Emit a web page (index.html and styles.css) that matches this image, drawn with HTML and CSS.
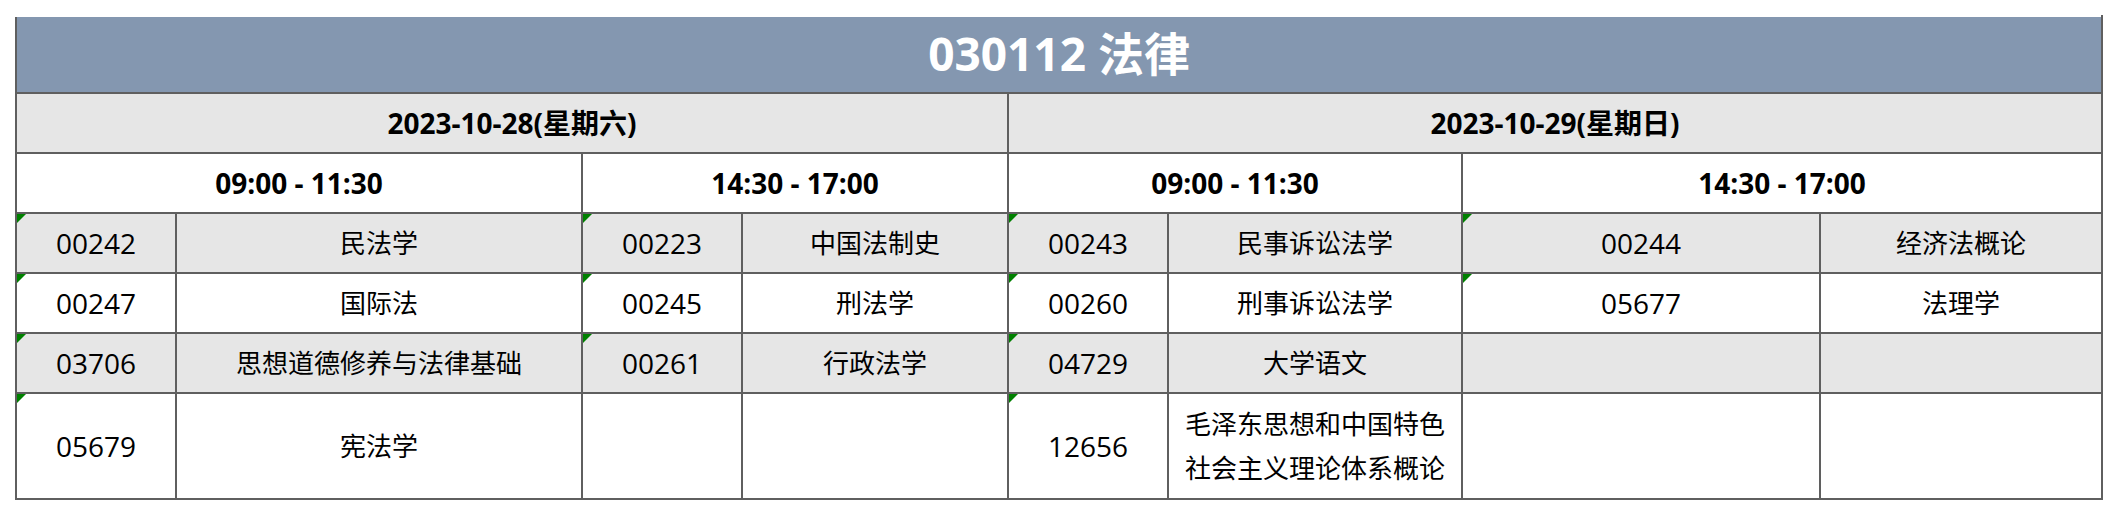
FILE: index.html
```html
<!DOCTYPE html>
<html lang="zh-CN">
<head>
<meta charset="utf-8">
<title>030112 法律</title>
<link rel="stylesheet" href="styles.css">
</head>
<body>
<table class="sched">
  <colgroup>
    <col class="c1"><col class="c2"><col class="c3"><col class="c4">
    <col class="c5"><col class="c6"><col class="c7"><col class="c8">
  </colgroup>
  <tr class="title-row"><td colspan="8" class="title">030112 法律</td></tr>
  <tr class="date-row">
    <td colspan="4" class="head">2023-10-28(星期六)</td>
    <td colspan="4" class="head">2023-10-29(星期日)</td>
  </tr>
  <tr class="time-row">
    <td colspan="2" class="head">09:00 - 11:30</td>
    <td colspan="2" class="head">14:30 - 17:00</td>
    <td colspan="2" class="head">09:00 - 11:30</td>
    <td colspan="2" class="head">14:30 - 17:00</td>
  </tr>
  <tr class="row gray">
    <td class="code flag">00242</td><td class="name">民法学</td>
    <td class="code flag">00223</td><td class="name">中国法制史</td>
    <td class="code flag">00243</td><td class="name">民事诉讼法学</td>
    <td class="code flag">00244</td><td class="name">经济法概论</td>
  </tr>
  <tr class="row">
    <td class="code flag">00247</td><td class="name">国际法</td>
    <td class="code flag">00245</td><td class="name">刑法学</td>
    <td class="code flag">00260</td><td class="name">刑事诉讼法学</td>
    <td class="code flag">05677</td><td class="name">法理学</td>
  </tr>
  <tr class="row gray">
    <td class="code flag">03706</td><td class="name">思想道德修养与法律基础</td>
    <td class="code flag">00261</td><td class="name">行政法学</td>
    <td class="code flag">04729</td><td class="name">大学语文</td>
    <td class="code"></td><td class="name"></td>
  </tr>
  <tr class="row tall">
    <td class="code flag">05679</td><td class="name">宪法学</td>
    <td class="code"></td><td class="name"></td>
    <td class="code flag">12656</td><td class="name two">毛泽东思想和中国特色<br>社会主义理论体系概论</td>
    <td class="code"></td><td class="name"></td>
  </tr>
</table>
</body>
</html>
```
FILE: styles.css
```css
html, body {
  margin: 0;
  padding: 0;
  background: #ffffff;
}

body {
  padding: 15px 0 0 15px;
  font-family: "Open Sans", "Noto Sans CJK SC", sans-serif;
  color: #000000;
}

.sched {
  border-collapse: collapse;
  table-layout: fixed;
  width: 2088px;
}

.c1 { width: 160px; }
.c2 { width: 406px; }
.c3 { width: 160px; }
.c4 { width: 266px; }
.c5 { width: 160px; }
.c6 { width: 294px; }
.c7 { width: 358px; }
.c8 { width: 282px; }

.sched td {
  border: 2px solid #5f5f5f;
  padding: 0;
  text-align: center;
  vertical-align: middle;
  position: relative;
}

.title-row { height: 77px; }

.sched td.title {
  border-top: 2px solid #ffffff;
  background: #8497b0;
  color: #ffffff;
  font-weight: 700;
  font-size: 46px;
  line-height: 1;
  padding-bottom: 3px;
}

.date-row { height: 60px; background: #e6e6e6; }
.time-row { height: 60px; background: #ffffff; }

.head {
  font-weight: 700;
  font-size: 28px;
  line-height: 1;
}

.row { height: 60px; background: #ffffff; }
.row.gray { background: #e6e6e6; }
.row.tall { height: 106px; }

.code {
  font-size: 28px;
  line-height: 1;
}

.name {
  font-size: 26px;
  line-height: 1;
}

.name.two {
  line-height: 44px;
}

.flag::before {
  content: "";
  position: absolute;
  top: 0;
  left: 0;
  width: 0;
  height: 0;
  border-top: 9px solid #008000;
  border-right: 9px solid transparent;
}
```
